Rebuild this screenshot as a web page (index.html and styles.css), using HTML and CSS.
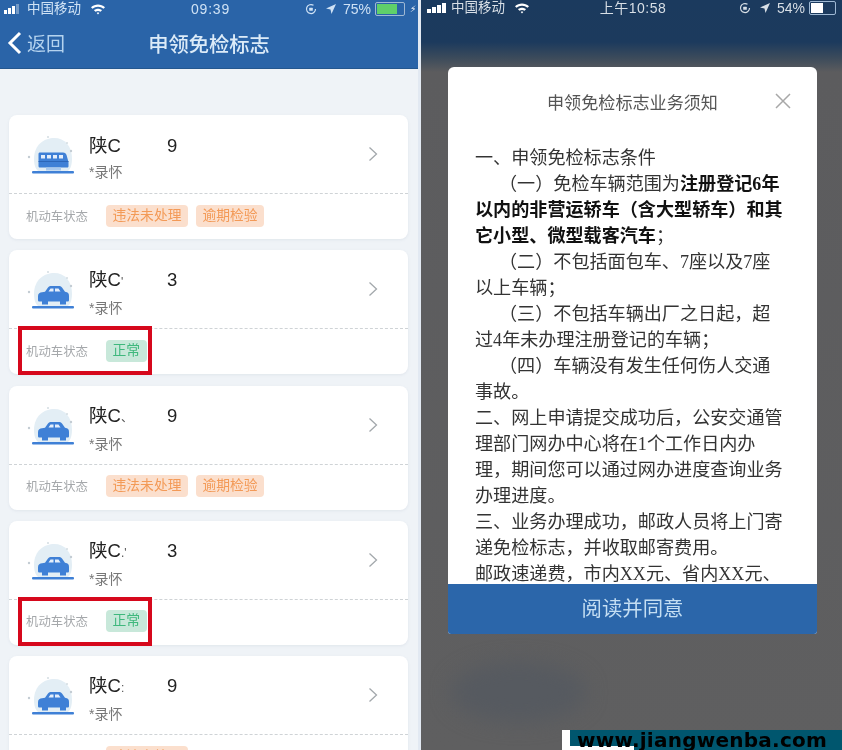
FILE: index.html
```html
<!DOCTYPE html>
<html lang="zh-CN">
<head>
<meta charset="utf-8">
<title>申领免检标志</title>
<link rel="stylesheet" href="styles.css">
</head>
<body>
<svg class="defs" width="0" height="0" aria-hidden="true">
  <symbol id="scene" viewBox="0 0 60 50">
    <path d="M10 30 C10 15 21 9 30 9 C41 9 48 17 48 30 C48 38 45 43 41 43 H17 C13 43 10 38 10 30Z" fill="#e3eef5"/>
    <circle cx="5" cy="28" r="1.2" fill="#c3ccd3"/>
    <circle cx="47" cy="22" r="1.2" fill="#c3ccd3"/>
    <circle cx="43" cy="14" r="1" fill="#d3dce2"/>
    <circle cx="24" cy="8" r="1" fill="#d3dce2"/>
    <rect x="8" y="42" width="42" height="2.4" rx="1" fill="#3f80d6"/>
  </symbol>
  <symbol id="car" viewBox="0 0 60 50">
    <use href="#scene"/>
    <path d="M14 36V32C14 29.500 16 28.600 18 28.300L21 27.800L24 23.500C25 22.300 26 22 27.500 22H34.500C36 22 37 22.300 38 23.500L41 27.800C44 28.200 45 29.500 45 32V36C45 37 44.500 37.500 43.500 37.500H15.500C14.500 37.500 14 37 14 36Z" fill="#3f80d6"/>
    <path d="M24.500 27.500L26.500 24.500H29.500V27.500ZM31 27.500V24.500H34.500L36.500 27.500Z" fill="#e4eefb"/>
    <rect x="18" y="37" width="6" height="3.500" fill="#3f80d6"/>
    <rect x="36" y="37" width="6" height="3.500" fill="#3f80d6"/>
  </symbol>
  <symbol id="bus" viewBox="0 0 60 50">
    <use href="#scene"/>
    <path d="M16 23.500H39C41 23.500 42 24.500 42.500 26L44.500 33V37C44.500 38 44 38.500 43 38.500H16C15 38.500 14.500 38 14.500 37V25C14.500 24 15 23.500 16 23.500Z" fill="#3f80d6"/>
    <path d="M17 26H21V29.500H17ZM23 26H27V29.500H23ZM29 26H33V29.500H29ZM35 26H39V29.500H35Z" fill="#e4eefb"/>
    <rect x="14.500" y="32" width="30" height="1" fill="#2c66b8"/>
    <rect x="22" y="38.500" width="15" height="3" fill="#a9c9ee"/>
  </symbol>
  <symbol id="wifi" viewBox="0 0 16 12">
    <path d="M1 4.300C5 .6 11 .6 15 4.300L13.500 5.800C10.300 3 5.700 3 2.500 5.800ZM4 7.300C6.300 5.300 9.700 5.300 12 7.300L10.500 8.800C9 7.600 7 7.600 5.500 8.800ZM6.700 10C7.500 9.400 8.500 9.400 9.300 10L8 11.500Z" fill="currentColor"/>
  </symbol>
  <symbol id="locate" viewBox="0 0 10 10">
    <path d="M10 0L0 4.500L4.500 5.500L5.500 10Z" fill="currentColor"/>
  </symbol>
  <symbol id="rotate" viewBox="0 0 12 12">
    <path d="M10.500 6A4.500 4.500 0 1 1 8.500 2.300" fill="none" stroke="currentColor" stroke-width="1.200"/>
    <rect x="4.200" y="4.800" width="3.600" height="3" rx=".5" fill="currentColor"/>
  </symbol>
</svg>

<main class="screens">
  <section class="phone phone-list">
    <header class="appbar">
      <div class="status">
        <div class="status-side">
          <span class="signal signal-dim"><i></i><i></i><i></i><i></i></span>
          <span class="carrier">中国移动</span>
          <svg class="wifi"><use href="#wifi"/></svg>
        </div>
        <div class="clock">09:39</div>
        <div class="status-side status-end">
          <svg class="rotate"><use href="#rotate"/></svg>
          <svg class="locate"><use href="#locate"/></svg>
          <span class="pct">75%</span>
          <span class="battery"><i class="charge"></i></span>
          <span class="bolt">⚡︎</span>
        </div>
      </div>
      <nav class="nav">
        <div class="back">
          <svg class="back-icon" viewBox="0 0 15 24"><path d="M13 2L3 12L13 22" fill="none" stroke="currentColor" stroke-width="3"/></svg>
          <span>返回</span>
        </div>
        <h1 class="nav-title">申领免检标志</h1>
      </nav>
    </header>

    <div class="list">
      <article class="card">
        <div class="card-main">
          <svg class="vehicle"><use href="#bus"/></svg>
          <div class="owner">
            <div class="plate"><span class="plate-head">陕C</span><span>9</span></div>
            <div class="name">*录怀</div>
          </div>
          <svg class="chevron" viewBox="0 0 10 16"><path d="M1.500 1.500L8.500 8L1.500 14.500" fill="none" stroke="currentColor" stroke-width="1.300"/></svg>
        </div>
        <div class="card-foot">
          <span class="foot-label">机动车状态</span>
          <span class="tag tag-warn">违法未处理</span>
          <span class="tag tag-warn">逾期检验</span>
        </div>
      </article>

      <article class="card">
        <div class="card-main">
          <svg class="vehicle"><use href="#car"/></svg>
          <div class="owner">
            <div class="plate"><span class="plate-head">陕C<small>'</small></span><span>3</span></div>
            <div class="name">*录怀</div>
          </div>
          <svg class="chevron" viewBox="0 0 10 16"><path d="M1.500 1.500L8.500 8L1.500 14.500" fill="none" stroke="currentColor" stroke-width="1.300"/></svg>
        </div>
        <div class="card-foot">
          <span class="foot-label">机动车状态</span>
          <span class="tag tag-ok">正常</span>
          <div class="marker"></div>
        </div>
      </article>

      <article class="card">
        <div class="card-main">
          <svg class="vehicle"><use href="#car"/></svg>
          <div class="owner">
            <div class="plate"><span class="plate-head">陕C<small>、</small></span><span>9</span></div>
            <div class="name">*录怀</div>
          </div>
          <svg class="chevron" viewBox="0 0 10 16"><path d="M1.500 1.500L8.500 8L1.500 14.500" fill="none" stroke="currentColor" stroke-width="1.300"/></svg>
        </div>
        <div class="card-foot">
          <span class="foot-label">机动车状态</span>
          <span class="tag tag-warn">违法未处理</span>
          <span class="tag tag-warn">逾期检验</span>
        </div>
      </article>

      <article class="card">
        <div class="card-main">
          <svg class="vehicle"><use href="#car"/></svg>
          <div class="owner">
            <div class="plate"><span class="plate-head">陕C<small>.'</small></span><span>3</span></div>
            <div class="name">*录怀</div>
          </div>
          <svg class="chevron" viewBox="0 0 10 16"><path d="M1.500 1.500L8.500 8L1.500 14.500" fill="none" stroke="currentColor" stroke-width="1.300"/></svg>
        </div>
        <div class="card-foot">
          <span class="foot-label">机动车状态</span>
          <span class="tag tag-ok">正常</span>
          <div class="marker"></div>
        </div>
      </article>

      <article class="card">
        <div class="card-main">
          <svg class="vehicle"><use href="#car"/></svg>
          <div class="owner">
            <div class="plate"><span class="plate-head">陕C<small>:</small></span><span>9</span></div>
            <div class="name">*录怀</div>
          </div>
          <svg class="chevron" viewBox="0 0 10 16"><path d="M1.500 1.500L8.500 8L1.500 14.500" fill="none" stroke="currentColor" stroke-width="1.300"/></svg>
        </div>
        <div class="card-foot">
          <span class="foot-label">机动车状态</span>
          <span class="tag tag-warn">违法未处理</span>
        </div>
      </article>
    </div>
  </section>

  <section class="phone phone-notice">
    <div class="status status-dark">
      <div class="status-side">
        <span class="signal"><i></i><i></i><i></i><i></i></span>
        <span class="carrier">中国移动</span>
        <svg class="wifi"><use href="#wifi"/></svg>
      </div>
      <div class="clock">上午10:58</div>
      <div class="status-side status-end">
        <svg class="rotate"><use href="#rotate"/></svg>
        <svg class="locate"><use href="#locate"/></svg>
        <span class="pct">54%</span>
        <span class="battery battery-half"><i class="level"></i></span>
      </div>
    </div>

    <div class="stage">
      <div class="modal">
        <div class="modal-head">
          <h2 class="modal-title">申领免检标志业务须知</h2>
          <svg class="close" viewBox="0 0 16 16"><path d="M1 1L15 15M15 1L1 15" fill="none" stroke="currentColor" stroke-width="1.500"/></svg>
        </div>
        <div class="modal-body">
          <p>一、申领免检标志条件</p>
          <p class="indent">（一）免检车辆范围为<b>注册登记6年以内的非营运轿车（含大型轿车）和其它小型、微型载客汽车</b>；</p>
          <p class="indent">（二）不包括面包车、7座以及7座<br>以上车辆；</p>
          <p class="indent">（三）不包括车辆出厂之日起，超<br>过4年未办理注册登记的车辆；</p>
          <p class="indent">（四）车辆没有发生任何伤人交通<br>事故。</p>
          <p>二、网上申请提交成功后，公安交通管<br>理部门网办中心将在1个工作日内办<br>理，期间您可以通过网办进度查询业务<br>办理进度。</p>
          <p>三、业务办理成功，邮政人员将上门寄<br>递免检标志，并收取邮寄费用。</p>
          <p>邮政速递费，市内XX元、省内XX元、</p>
        </div>
        <div class="modal-action">阅读并同意</div>
      </div>
    </div>
    <div class="backdrop-blob"></div>
    <div class="watermark"><span class="wm-patch"></span><span class="wm-text">www.jiangwenba.com</span></div>
  </section>
</main>
</body>
</html>
```

FILE: styles.css
```css
html, body {
  margin: 0;
  padding: 0;
  height: 750px;
  overflow: hidden;
}

body {
  font-family: "Liberation Sans", "Noto Sans CJK SC", sans-serif;
  background: #5f5f60;
}

.defs {
  display: block;
  height: 0;
}

.screens {
  display: flex;
  width: 842px;
  height: 750px;
  overflow: hidden;
}

.phone {
  position: relative;
  flex: 0 0 421px;
  height: 750px;
  overflow: hidden;
  box-sizing: border-box;
  filter: blur(0.45px);
}

.phone-list {
  background: #eff3f7;
  border-right: 3px solid #e2e9f2;
}

.appbar {
  background: #2a64a8;
  height: 69px;
  box-sizing: border-box;
  box-shadow: inset 0 -1px 0 #24578f;
  color: #cfe2f5;
}

.status {
  display: grid;
  grid-template-columns: 1fr auto 1fr;
  align-items: center;
  height: 18px;
  padding: 0 1px 0 4px;
  font-size: 13.500px;
  line-height: 16px;
}

.status-side {
  display: flex;
  align-items: center;
  min-width: 0;
  white-space: nowrap;
}

.status-end {
  justify-content: flex-end;
}

.signal {
  display: flex;
  align-items: flex-end;
  gap: 1px;
  width: 17px;
  height: 10px;
  margin-right: 6px;
}

.signal i {
  display: block;
  width: 3px;
  background: #fff;
}

.signal i:nth-child(1) { height: 4px; }
.signal i:nth-child(2) { height: 6px; }
.signal i:nth-child(3) { height: 8px; }
.signal i:nth-child(4) { height: 10px; }
.signal-dim i:nth-child(4) { opacity: .35; }

.carrier {
  width: 54px;
}

.wifi {
  width: 16px;
  height: 12px;
  margin-left: 9px;
  color: #fff;
}

.clock {
  font-size: 14px;
  letter-spacing: .8px;
}

.rotate {
  width: 12px;
  height: 12px;
  margin-right: 9px;
}

.locate {
  width: 10px;
  height: 10px;
  margin-right: 7px;
}

.pct {
  margin-right: 4px;
  font-size: 14px;
}

.battery {
  display: block;
  width: 26px;
  height: 10px;
  padding: 1px;
  border: 1px solid #9fb9d4;
  border-radius: 2px;
  box-sizing: content-box;
}

.battery i {
  display: block;
  height: 100%;
  background: #5fd06a;
}

.battery .charge { width: 75%; }

.bolt {
  width: 7px;
  margin-left: 5px;
  font-size: 9px;
  color: #fff;
}

.nav {
  display: grid;
  grid-template-columns: 1fr auto 1fr;
  align-items: center;
  height: 49px;
  box-sizing: border-box;
  padding: 0 7px;
}

.back {
  display: flex;
  align-items: center;
  gap: 5px;
  font-size: 19px;
  color: #b4d3ef;
}

.back-icon {
  width: 15px;
  height: 24px;
  color: #fff;
}

.nav-title {
  margin: 0;
  font-size: 20.300px;
  font-weight: 500;
  color: #dcebf8;
}

.list {
  display: flex;
  flex-direction: column;
  gap: 11.250px;
  padding: 46px 10px 0 9px;
}

.card {
  flex: 0 0 124px;
  background: #fff;
  border-radius: 8px;
  box-shadow: 0 1px 3px rgba(120, 140, 165, .12);
}

.card-main {
  display: flex;
  align-items: center;
  height: 79px;
  box-sizing: border-box;
  padding: 0 30px 0 15px;
  border-bottom: 1px dashed #cfd3d6;
}

.vehicle {
  flex: 0 0 60px;
  width: 60px;
  height: 50px;
  margin-right: 5px;
}

.owner {
  flex: 1;
  padding-top: 10px;
}

.plate {
  display: flex;
  font-size: 18.500px;
  line-height: 26px;
  color: #222;
}

.plate-head {
  width: 78px;
}

.plate-head small {
  font-size: 12px;
  color: #555;
}

.name {
  font-size: 14px;
  line-height: 26px;
  color: #777;
}

.chevron {
  width: 10px;
  height: 16px;
  color: #a3a8ac;
}

.card-foot {
  position: relative;
  display: flex;
  align-items: center;
  gap: 8px;
  height: 45px;
  box-sizing: border-box;
  padding: 0 0 2px 17px;
}

.foot-label {
  width: 71px;
  margin-right: 1px;
  font-size: 12.400px;
  color: #a5a8ab;
}

.tag {
  padding: 0 6.500px;
  height: 22px;
  line-height: 22px;
  font-size: 13.800px;
  border-radius: 4px;
}

.tag-warn {
  background: #fbdfcd;
  color: #f39a57;
}

.tag-ok {
  background: #c8e8da;
  color: #3fb87d;
}

.marker {
  position: absolute;
  left: 9px;
  top: -3px;
  width: 134px;
  height: 49px;
  box-sizing: border-box;
  border: 4px solid #d6081c;
}

.phone-notice {
  background: linear-gradient(#1b3a5e 0, #1c3a5d 42px, #3c4b5b 58px, #5c5c5e 72px, #5f5f60 100%);
}

.status-dark {
  height: 14px;
  padding: 0 6px 0 6px;
  color: #d8dfe6;
}

.status-dark .carrier { width: 54px; margin-left: -1px; }
.status-dark .signal { width: 19px; }
.status-dark .signal i { width: 4px; }
.status-dark .clock { margin-left: 3px; letter-spacing: .5px; }

.battery-half {
  width: 23px;
}

.battery-half .level {
  width: 52%;
  background: #fff;
}

.stage {
  padding: 53px 25px 0 27px;
}

.modal {
  display: flex;
  flex-direction: column;
  height: 567px;
  background: #fff;
  border-radius: 6px 6px 3px 3px;
  overflow: hidden;
}

.modal-head {
  display: grid;
  grid-template-columns: 1fr auto 1fr;
  align-items: center;
  flex: 0 0 68px;
  padding: 0 26px;
}

.modal-title {
  grid-column: 2;
  margin: 0;
  font-size: 17.100px;
  font-weight: 400;
  color: #555;
}

.close {
  grid-column: 3;
  justify-self: end;
  width: 16px;
  height: 16px;
  color: #a8a8a8;
}

.modal-body {
  flex: 1;
  min-height: 0;
  overflow: hidden;
  padding: 10px 26px 0 27px;
  font-family: "Liberation Serif", "Noto Sans CJK SC", serif;
  font-size: 18.100px;
  line-height: 26px;
  color: #333;
}

.modal-body p {
  margin: 0;
}

.modal-body .indent {
  text-indent: 24px;
}

.modal-body b {
  color: #111;
  font-weight: 700;
}

.modal-action {
  flex: 0 0 50px;
  background: #2b66aa;
  color: #c4def3;
  font-size: 20.400px;
  line-height: 50px;
  text-align: center;
}

.backdrop-blob {
  position: absolute;
  left: 30px;
  top: 662px;
  width: 135px;
  height: 60px;
  border-radius: 50%;
  background: #565a60;
  filter: blur(10px);
}

.watermark {
  position: absolute;
  left: 141px;
  top: 730px;
  display: flex;
  width: 280px;
  height: 20px;
}

.wm-patch {
  flex: 0 0 8px;
  background: #fff;
}

.wm-text {
  flex: 1;
  padding-left: 7px;
  background: linear-gradient(#fff, #fff) 0 100% / 64px 4px no-repeat, #00566e;
  color: #000;
  font-family: "DejaVu Sans", sans-serif;
  font-size: 20px;
  font-weight: 700;
  letter-spacing: .25px;
  line-height: 20px;
  white-space: nowrap;
  overflow: hidden;
}
```
